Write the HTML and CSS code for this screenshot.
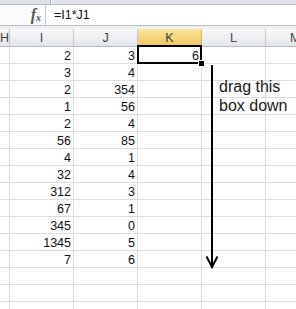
FILE: index.html
```html
<!DOCTYPE html>
<html lang="en">
<head>
  <meta charset="UTF-8" />
  <title>Fill down</title>
  <link rel="stylesheet" href="styles.css">
</head>
<body>
  <div class="ribbon-edge"><div class="name-edge"></div></div>
  <div class="formula-bar">
    <div class="fx"><i>f</i><sub>x</sub></div>
    <div class="formula">=I1*J1</div>
  </div>
  <div class="gap"></div>
  <div class="sheet">
    <div class="row head">
      <div class="edge">H</div><div>I</div><div>J</div><div class="active">K</div><div>L</div><div class="last">M</div>
    </div>
    <div class="row"><div></div><div>2</div><div>3</div><div>6</div><div></div><div></div></div>
    <div class="row"><div></div><div>3</div><div>4</div><div></div><div></div><div></div></div>
    <div class="row"><div></div><div>2</div><div>354</div><div></div><div></div><div></div></div>
    <div class="row"><div></div><div>1</div><div>56</div><div></div><div></div><div></div></div>
    <div class="row"><div></div><div>2</div><div>4</div><div></div><div></div><div></div></div>
    <div class="row"><div></div><div>56</div><div>85</div><div></div><div></div><div></div></div>
    <div class="row"><div></div><div>4</div><div>1</div><div></div><div></div><div></div></div>
    <div class="row"><div></div><div>32</div><div>4</div><div></div><div></div><div></div></div>
    <div class="row"><div></div><div>312</div><div>3</div><div></div><div></div><div></div></div>
    <div class="row"><div></div><div>67</div><div>1</div><div></div><div></div><div></div></div>
    <div class="row"><div></div><div>345</div><div>0</div><div></div><div></div><div></div></div>
    <div class="row"><div></div><div>1345</div><div>5</div><div></div><div></div><div></div></div>
    <div class="row"><div></div><div>7</div><div>6</div><div></div><div></div><div></div></div>
    <div class="row"><div></div><div></div><div></div><div></div><div></div><div></div></div>
    <div class="row"><div></div><div></div><div></div><div></div><div></div><div></div></div>
    <div class="row"><div></div><div></div><div></div><div></div><div></div><div></div></div>

    <div class="selection"><span class="handle"></span></div>
    <svg class="arrow" width="296" height="279" viewBox="0 0 296 279">
      <line x1="212" y1="36" x2="212" y2="238" />
      <polyline points="206.5,227.5 212,238 217.5,227.5" />
    </svg>
    <div class="note">drag this<br>box down</div>
  </div>
</body>
</html>
```

FILE: styles.css
```css
body {
  margin: 0;
  width: 296px;
  height: 309px;
  overflow: hidden;
  background: #fff;
  font-family: 'Liberation Sans', Arial, sans-serif;
}
.ribbon-edge {
  height: 4px;
  background: #dfe2e6;
  border-bottom: 1px solid #b9bec5;
}
.name-edge {
  width: 50px;
  height: 4px;
  border-right: 1px solid #a9aeb5;
  box-shadow: 1px 0 0 #fff;
}
.formula-bar {
  display: flex;
  height: 20px;
  border-bottom: 1px solid #b9bec5;
}
.fx {
  width: 46px;
  box-sizing: border-box;
  padding-right: 4px;
  text-align: right;
  background: #fafbfc;
  border-right: 1px solid #c3c7cc;
  font-family: 'Liberation Serif', 'Times New Roman', serif;
  font-weight: bold;
  color: #555;
  font-size: 16px;
  line-height: 20px;
}
.fx sub {
  font-size: 10px;
  font-style: italic;
  vertical-align: -1px;
}
.formula {
  flex: 1;
  padding-left: 8px;
  font-size: 12.5px;
  line-height: 20px;
  color: #111;
}
.gap {
  height: 3px;
  background: #eef0f2;
}
.sheet {
  position: relative;
}
.row {
  display: grid;
  grid-template-columns: 10px repeat(5, 64px);
  height: 17px;
}
.row div {
  box-sizing: border-box;
  height: 17px;
  border-right: 1px solid #dadcdd;
  border-bottom: 1px solid #dadcdd;
  padding: 1px 2px 0 0;
  text-align: right;
  font-size: 12.5px;
  line-height: 16px;
  color: #111;
  overflow: hidden;
}
.row.head {
  height: 18px;
}
.row.head div {
  height: 18px;
  padding: 1px 0 0;
  text-align: center;
  line-height: 16px;
  color: #444;
  background: linear-gradient(#f8f9fa, #e3e6ea);
  border-right: 1px solid #c6cad0;
  border-bottom: 1px solid #b4b9c0;
}
.row.head .edge {
  text-align: left;
  text-indent: 0;
}
.row.head .last {
  text-align: left;
  padding-left: 24px;
}
.row.head .active {
  background: linear-gradient(#fbe49a, #f2c562);
  border-right-color: #e0b14f;
  color: #3a3a3a;
}
.selection {
  position: absolute;
  left: 137px;
  top: 16px;
  width: 61px;
  height: 15px;
  border: 2px solid #000;
}
.handle {
  position: absolute;
  right: -5px;
  bottom: -5px;
  width: 5px;
  height: 5px;
  background: #000;
  border: 1px solid #fff;
}
.arrow {
  position: absolute;
  left: 0;
  top: 0;
  fill: none;
  stroke: #000;
  stroke-width: 2;
}
.note {
  position: absolute;
  left: 219px;
  top: 48px;
  font-size: 16px;
  line-height: 19px;
  color: #1a1a1a;
}
```
